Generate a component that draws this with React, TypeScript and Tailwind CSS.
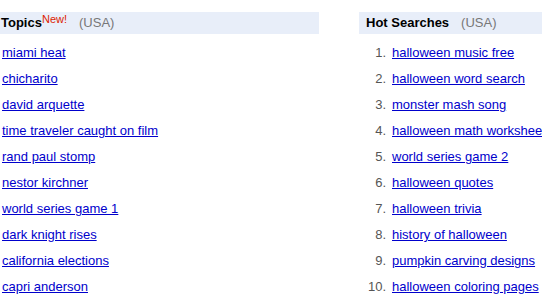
const TOPICS = [
  "miami heat",
  "chicharito",
  "david arquette",
  "time traveler caught on film",
  "rand paul stomp",
  "nestor kirchner",
  "world series game 1",
  "dark knight rises",
  "california elections",
  "capri anderson",
]

const HOT = [
  "halloween music free",
  "halloween word search",
  "monster mash song",
  "halloween math worksheets",
  "world series game 2",
  "halloween quotes",
  "halloween trivia",
  "history of halloween",
  "pumpkin carving designs",
  "halloween coloring pages",
]

export default function App() {
  return (
    <div className="flex w-[542px] h-[305px] overflow-hidden bg-white pt-3 font-['Liberation_Sans',Arial,sans-serif] text-[13px]">
      {/* Topics column */}
      <div className="w-[319px] shrink-0">
        <div className="flex h-[22px] items-center bg-[#e8eef9] pl-px">
          <span className="font-bold text-black">Topics</span>
          <sup className="relative -top-[4px] text-[11px] text-[#dd2200]">New!</sup>
          <span className="ml-3 text-[#777]">(USA)</span>
        </div>
        <ul className="pt-[9px] pl-[2px]">
          {TOPICS.map((t) => (
            <li key={t} className="h-[26px] leading-[20px]">
              <a href="#" className="text-[#0000cc] underline">
                {t}
              </a>
            </li>
          ))}
        </ul>
      </div>

      {/* Hot searches column */}
      <div className="ml-[40px] w-[200px] shrink-0">
        <div className="flex h-[22px] items-center bg-[#e8eef9] pl-[7px]">
          <span className="font-bold text-black">Hot Searches</span>
          <span className="ml-3 text-[#777]">(USA)</span>
        </div>
        <ol className="pt-[9px]">
          {HOT.map((t, i) => (
            <li key={t} className="flex h-[26px] leading-[20px] whitespace-nowrap">
              <span className="w-[27px] shrink-0 text-right text-[#555]">{i + 1}.</span>
              <a href="#" className="ml-[6px] text-[#0000cc] underline">
                {t}
              </a>
            </li>
          ))}
        </ol>
      </div>
    </div>
  )
}
